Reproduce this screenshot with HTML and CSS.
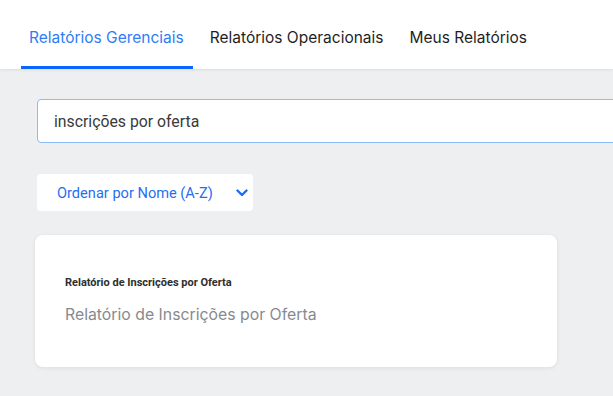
FILE: index.html
```html
<!DOCTYPE html>
<html lang="pt">
<head>
<meta charset="utf-8">
<link rel="stylesheet" href="styles.css">
</head>
<body>
<header class="tabs-bar">
  <nav class="tabs">
    <a class="tab active">Relatórios Gerenciais</a>
    <a class="tab">Relatórios Operacionais</a>
    <a class="tab">Meus Relatórios</a>
  </nav>
</header>
<main class="content">
  <div class="search">inscrições por oferta</div>
  <div class="sort">
    <span class="sort-label">Ordenar por Nome (A-Z)</span>
    <svg class="chev" width="12" height="8" viewBox="0 0 12 8"><path d="M1.5 1.5 L6 6 L10.5 1.5" fill="none" stroke="#1a6ef5" stroke-width="2.4" stroke-linecap="round" stroke-linejoin="round"/></svg>
  </div>
  <section class="card">
    <h3 class="card-title">Relatório de Inscrições por Oferta</h3>
    <p class="card-desc">Relatório de Inscrições por Oferta</p>
  </section>
</main>
</body>
</html>
```
FILE: styles.css
```css
* { box-sizing: border-box; }
html, body { margin: 0; padding: 0; }
body {
  background: #eeeff1;
  font-family: Inter, "Noto Sans", sans-serif;
  overflow: hidden;
  width: 613px;
  height: 396px;
}
.tabs-bar {
  background: #fff;
  height: 69px;
  box-shadow: 0 1px 3px rgba(0,0,0,0.08);
  position: relative;
}
.tabs {
  display: flex;
  gap: 9px;
  padding-left: 21px;
  height: 100%;
}
.tab {
  display: flex;
  align-items: center;
  padding: 8px 9px 0 8px;
  font-size: 15.5px;
  color: #1f1f1f;
  border-bottom: 3px solid transparent;
}
.tab.active {
  color: #2f7cf6;
  border-bottom-color: #0a66ff;
}
.content {
  padding: 30px 0 0 37px;
}
.search {
  width: 620px;
  height: 44px;
  background: #fff;
  border: 1px solid #8bbcf7;
  border-radius: 4px;
  display: flex;
  align-items: center;
  padding-left: 16px;
  font-family: Roboto, sans-serif;
  font-size: 15.8px;
  color: #3a3a3a;
}
.sort {
  margin-top: 31px;
  width: 216px;
  height: 37px;
  background: #fff;
  border-radius: 4px;
  display: flex;
  align-items: center;
  padding-left: 20px;
  padding-right: 5px;
  justify-content: space-between;
}
.sort-label {
  font-family: Roboto, sans-serif;
  font-size: 14.6px;
  color: #1f6ff0;
}
.card {
  margin: 24px 0 0 -2px;
  width: 522px;
  height: 132px;
  background: #fff;
  border-radius: 8px;
  box-shadow: 0 1px 4px rgba(0,0,0,0.08);
  padding: 41px 0 0 30px;
}
.card-title {
  margin: 0;
  font-family: Roboto, sans-serif;
  font-size: 11px;
  font-weight: 700;
  color: #2e2e2e;
}
.card-desc {
  margin: 16px 0 0;
  font-family: Inter, sans-serif;
  font-size: 15.8px;
  color: #878a8f;
}
```
